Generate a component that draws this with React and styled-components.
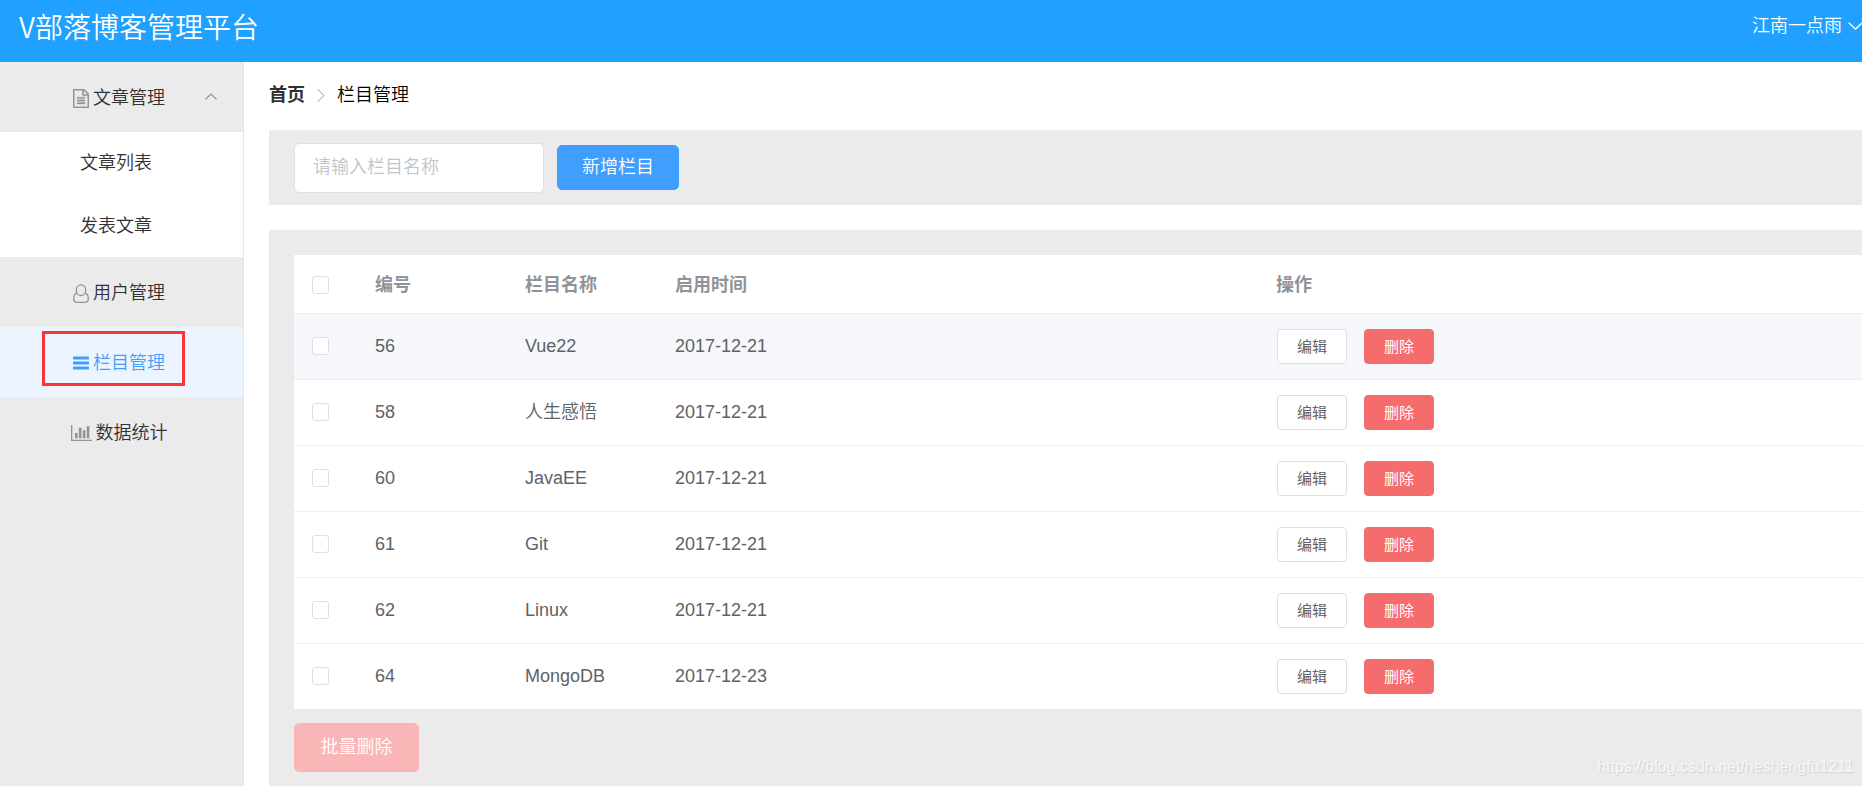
import React from "react";
import styled, { createGlobalStyle } from "styled-components";

const GlobalStyle = createGlobalStyle`
  *, *::before, *::after { box-sizing: border-box; }
  body {
    margin: 0;
    background: #fff;
    color: #303133;
    font-family: "Liberation Sans", "Noto Sans CJK SC", sans-serif;
    font-size: 18px;
    line-height: 24px;
    overflow-x: hidden;
  }
  button, input { font: inherit; }
`;

const Page = styled.div`
  position: relative;
  min-height: 100vh;
  display: flex;
  flex-direction: column;
`;

const Header = styled.header`
  height: 62px;
  padding: 0 0 10px 19px;
  display: flex;
  align-items: center;
  justify-content: space-between;
  background: #20a0ff;
  color: #fff;
  overflow: hidden;
`;

const Title = styled.h1`
  margin: 0;
  font-family: "Noto Sans CJK SC", sans-serif;
  font-size: 28px;
  line-height: 36px;
  font-weight: 350;
`;

const UserMenu = styled.button`
  display: flex;
  align-items: center;
  gap: 6px;
  margin-right: -1px;
  padding: 0;
  border: 0;
  background: none;
  color: #fff;
  white-space: nowrap;
  font-weight: 350;
`;

const Body = styled.div`
  flex: 1;
  display: flex;
`;

const Sidebar = styled.nav`
  flex: 0 0 244px;
  border-right: 1px solid #e6e6e6;
  background: #ebebeb;
  font-weight: 350;
`;

const MenuItem = styled.a`
  position: relative;
  height: 70px;
  padding: 2px 26px 0 33px;
  display: grid;
  grid-template-columns: 1fr 12px;
  align-items: center;
  text-decoration: none;
  background: ${(p) => (p.$active ? "#ecf5ff" : "#ebebeb")};
  color: ${(p) => (p.$active ? "#409eff" : "#303133")};
  svg { color: ${(p) => (p.$active ? "#409eff" : "#909399")}; }
`;

const MenuLabel = styled.span`
  display: flex;
  align-items: center;
  justify-content: center;
  gap: 4px;
`;

const SubMenu = styled.div`
  display: flex;
  flex-direction: column;
  height: 125px;
  background: #fff;
`;

const SubItem = styled.a`
  flex: 1;
  padding-left: 80px;
  display: flex;
  align-items: center;
  color: #303133;
  text-decoration: none;
`;

const Highlight = styled.span`
  position: absolute;
  left: 42px;
  top: 4px;
  width: 143px;
  height: 55px;
  border: 3px solid #fa3534;
  pointer-events: none;
`;

const Main = styled.main`
  flex: 1;
  min-width: 0;
  padding-left: 25px;
  display: flex;
  flex-direction: column;
`;

const Breadcrumb = styled.nav`
  height: 68px;
  padding-bottom: 2px;
  display: flex;
  align-items: center;
  gap: 11px;
  color: #000;
  font-weight: 350;
`;

const HomeLink = styled.a`
  color: #303133;
  font-weight: 700;
  text-decoration: none;
`;

const Toolbar = styled.form`
  height: 75px;
  margin-bottom: 25px;
  padding: 0 25px;
  display: flex;
  align-items: center;
  gap: 13px;
  background: #ebebeb;
`;

const NameInput = styled.input`
  width: 250px;
  height: 50px;
  padding: 0 18px;
  border: 1px solid #dcdfe6;
  border-radius: 5px;
  background: #fff;
  color: #606266;
  font-weight: 350;
  outline: none;
  &::placeholder { color: #c0c4cc; opacity: 1; }
`;

const buttonColors = {
  plain: "background: #fff; border-color: #dcdfe6; color: #606266;",
  primary: "background: #409eff; border-color: #409eff; color: #fff;",
  danger: "background: #f56c6c; border-color: #f56c6c; color: #fff;",
  dangerOff: "background: #fab6b6; border-color: #fab6b6; color: #fff;",
};

const Button = styled.button`
  display: inline-flex;
  align-items: center;
  justify-content: center;
  width: ${(p) => p.$width}px;
  height: ${(p) => p.$height}px;
  padding: 0 0 2px;
  border: 1px solid;
  border-radius: 5px;
  white-space: nowrap;
  font-weight: 350;
  ${(p) => buttonColors[p.$kind]}
`;

const SmallButton = styled(Button).attrs({ $width: 70, $height: 35 })`
  padding: 0;
  border-radius: 4px;
  font-size: 15px;
  line-height: 20px;
  font-weight: 400;
`;

const Panel = styled.section`
  flex: 1;
  padding: 25px 0 14px 25px;
  background: #ebebeb;
`;

const Table = styled.table`
  width: 100%;
  table-layout: fixed;
  border-collapse: separate;
  border-spacing: 0;
  background: #fff;
  color: #606266;
`;

const HeadCell = styled.th`
  height: 59px;
  padding: 1px 13px 0;
  border-bottom: 1px solid #ebeef5;
  color: #909399;
  text-align: left;
  font-weight: 700;
`;

const Cell = styled.td`
  padding: 0 13px 2px;
  border-bottom: 1px solid #ebeef5;
  font-size: 18px;
  font-weight: 350;
`;

const ActionCell = styled(Cell)`
  padding-bottom: 0;
`;

const Row = styled.tr`
  height: 66px;
  background: ${(p) => (p.$hover ? "#f5f7fa" : "#fff")};
  &:last-child { height: 65px; }
  &:last-child ${Cell} { border-bottom: 0; }
`;

const CheckBox = styled.input`
  appearance: none;
  display: block;
  width: 17px;
  height: 18px;
  margin: 0 0 0 5px;
  border: 1px solid #dcdfe6;
  border-radius: 3px;
  background: #fff;
  &:checked { background: #409eff; border-color: #409eff; }
`;

const Actions = styled.div`
  display: flex;
  gap: 17px;
  padding-left: 1px;
`;

const BatchBar = styled.div`
  padding-top: 14px;
  display: flex;
`;

const Watermark = styled.div`
  position: absolute;
  right: 8px;
  bottom: 7px;
  color: #f7f7f7;
  font-size: 16px;
  text-shadow: 1px 1px 1px #d0d0d0;
  pointer-events: none;
`;

const FileIcon = () => (
  <svg width="16" height="19" viewBox="128 0 1536 1792" preserveAspectRatio="none" fill="currentColor" stroke="currentColor" strokeWidth="30" aria-hidden="true">
    <path d="M1596 380q28 28 48 76t20 88v1152q0 40-28 68t-68 28h-1344q-40 0-68-28t-28-68v-1600q0-40 28-68t68-28h896q40 0 88 20t76 48zm-444-244v376h376q-10-29-22-41l-313-313q-12-12-41-22zm384 1528v-1024h-416q-40 0-68-28t-28-68v-416h-768v1536h1280zm-1024-864q0-14 9-23t23-9h704q14 0 23 9t9 23v64q0 14-9 23t-23 9h-704q-14 0-23-9t-9-23v-64zm736 224q14 0 23 9t9 23v64q0 14-9 23t-23 9h-704q-14 0-23-9t-9-23v-64q0-14 9-23t23-9h704zm0 256q14 0 23 9t9 23v64q0 14-9 23t-23 9h-704q-14 0-23-9t-9-23v-64q0-14 9-23t23-9h704z" />
  </svg>
);

const UserIcon = () => (
  <svg width="16" height="19" viewBox="0 0 16 19" fill="none" stroke="currentColor" strokeWidth="1.3" aria-hidden="true">
    <rect x="3.4" y="0.9" width="9.2" height="10.6" rx="4.6" />
    <path d="M4 9.2C1.600 9.700.7 11.800.7 14.600c0 2.200 1.200 3.700 3 3.700h8.600c1.800 0 3-1.500 3-3.700 0-2.800-.9-4.900-3.300-5.400" />
  </svg>
);

const BarsIcon = () => (
  <svg width="16" height="14" viewBox="0 0 16 14" fill="currentColor" aria-hidden="true">
    <rect y="0.500" width="16" height="3" rx="0.600" />
    <rect y="5.500" width="16" height="3" rx="0.600" />
    <rect y="10.500" width="16" height="3" rx="0.600" />
  </svg>
);

const ChartIcon = () => (
  <svg width="21" height="16" viewBox="0 128 2048 1536" preserveAspectRatio="none" fill="currentColor" aria-hidden="true">
    <path d="M640 896v512h-256v-512h256zm384-512v1024h-256v-1024h256zm1024 1152v128h-2048v-1536h128v1408h1920zm-640-896v768h-256v-768h256zm384-384v1152h-256v-1152h256z" />
  </svg>
);

const Chevron = ({ d, width, height, color = "currentColor", stroke = 1.3 }) => (
  <svg width={width} height={height} viewBox={`0 0 ${width} ${height}`} fill="none" stroke={color} strokeWidth={stroke} strokeLinecap="round" aria-hidden="true">
    <path d={d} />
  </svg>
);

const rows = [
  { id: 56, name: "Vue22", date: "2017-12-21", hover: true },
  { id: 58, name: "人生感悟", date: "2017-12-21" },
  { id: 60, name: "JavaEE", date: "2017-12-21" },
  { id: 61, name: "Git", date: "2017-12-21" },
  { id: 62, name: "Linux", date: "2017-12-21" },
  { id: 64, name: "MongoDB", date: "2017-12-23" },
];

export default function App() {
  return (
    <Page>
      <GlobalStyle />
      <Header>
        <Title>V部落博客管理平台</Title>
        <UserMenu type="button">
          江南一点雨
          <Chevron width={15} height={9} d="M1 1l6.500 6 6.500-6" />
        </UserMenu>
      </Header>
      <Body>
        <Sidebar aria-label="主菜单">
          <MenuItem href="#article">
            <MenuLabel><FileIcon />文章管理</MenuLabel>
            <Chevron width={12} height={12} stroke={1.1} d="M.8 7L6 2 11.200 7" />
          </MenuItem>
          <SubMenu>
            <SubItem href="#list">文章列表</SubItem>
            <SubItem href="#post">发表文章</SubItem>
          </SubMenu>
          <MenuItem href="#user">
            <MenuLabel><UserIcon />用户管理</MenuLabel>
          </MenuItem>
          <MenuItem href="#category" $active aria-current="page">
            <MenuLabel><BarsIcon />栏目管理</MenuLabel>
            <Highlight />
          </MenuItem>
          <MenuItem href="#stats">
            <MenuLabel><ChartIcon />数据统计</MenuLabel>
          </MenuItem>
        </Sidebar>
        <Main>
          <Breadcrumb aria-label="面包屑">
            <HomeLink href="#home">首页</HomeLink>
            <Chevron width={10} height={15} color="#c0c4cc" d="M2 1.500l6 6-6 6" />
            <span>栏目管理</span>
          </Breadcrumb>
          <Toolbar onSubmit={(e) => e.preventDefault()}>
            <NameInput type="text" aria-label="栏目名称" placeholder="请输入栏目名称" />
            <Button type="submit" $kind="primary" $width={122} $height={45}>新增栏目</Button>
          </Toolbar>
          <Panel>
            <Table>
              <colgroup>
                <col width="68" />
                <col width="150" />
                <col width="150" />
                <col width="601" />
                <col />
              </colgroup>
              <thead>
                <tr>
                  <HeadCell><CheckBox type="checkbox" aria-label="全选" /></HeadCell>
                  <HeadCell>编号</HeadCell>
                  <HeadCell>栏目名称</HeadCell>
                  <HeadCell>启用时间</HeadCell>
                  <HeadCell>操作</HeadCell>
                </tr>
              </thead>
              <tbody>
                {rows.map((r) => (
                  <Row key={r.id} $hover={r.hover}>
                    <Cell><CheckBox type="checkbox" aria-label={`选择 ${r.name}`} /></Cell>
                    <Cell>{r.id}</Cell>
                    <Cell>{r.name}</Cell>
                    <Cell>{r.date}</Cell>
                    <ActionCell>
                      <Actions>
                        <SmallButton type="button" $kind="plain">编辑</SmallButton>
                        <SmallButton type="button" $kind="danger">删除</SmallButton>
                      </Actions>
                    </ActionCell>
                  </Row>
                ))}
              </tbody>
            </Table>
            <BatchBar>
              <Button type="button" disabled $kind="dangerOff" $width={125} $height={49}>批量删除</Button>
            </BatchBar>
          </Panel>
        </Main>
      </Body>
      <Watermark>https://blog.csdn.net/heshengfu1211</Watermark>
    </Page>
  );
}
